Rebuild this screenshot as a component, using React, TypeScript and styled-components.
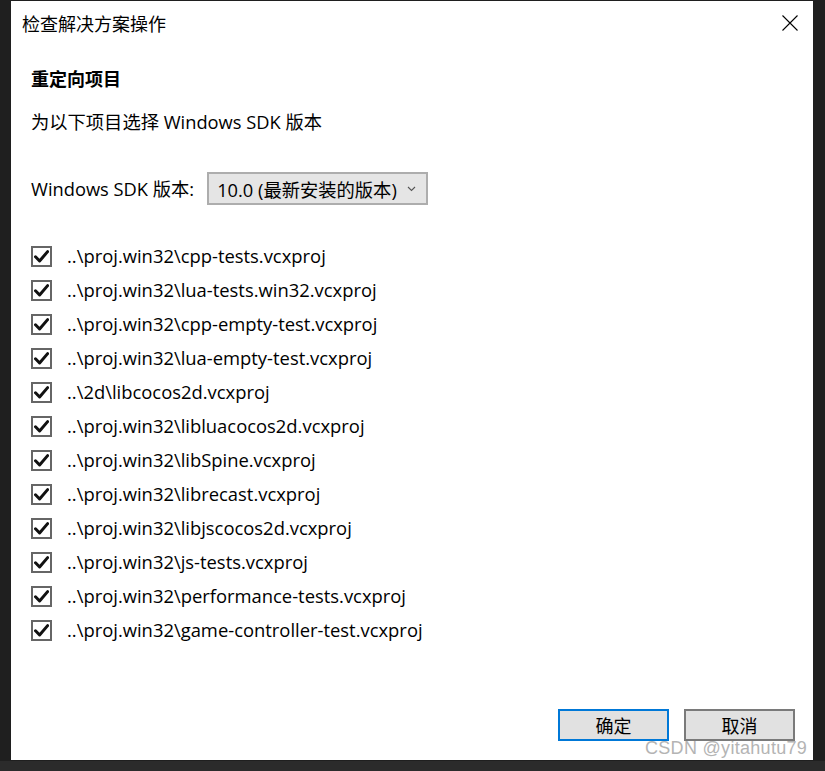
import React from "react";
import styled, { createGlobalStyle } from "styled-components";

const Global = createGlobalStyle`
  html, body { margin: 0; padding: 0; background: #1f1f1f; }
  body { font-family: "Open Sans", "Noto Sans CJK SC", sans-serif; }
`;

const Screen = styled.div`
  position: relative;
  width: 825px;
  height: 771px;
  background: #1f1f1f;
  overflow: hidden;
  display: flex;
  flex-direction: column;
`;

const Dialog = styled.div`
  margin: 1px 0 0 11px;
  width: 802px;
  height: 759px;
  background: #ffffff;
  display: flex;
  flex-direction: column;
  color: #000;
`;

const BottomBand = styled.div`
  margin-top: 1px;
  flex: 1;
  background: #2b2b2b;
`;

const TitleBar = styled.div`
  height: 44px;
  display: flex;
  align-items: center;
  justify-content: space-between;
  padding: 0 14px 0 11px;
`;

const Title = styled.div`
  font-family: "Noto Sans CJK SC", sans-serif;
  font-size: 18px;
  line-height: 22px;
  color: #000;
`;

const Close = styled.div`
  width: 18px;
  height: 18px;
  display: flex;
  align-items: center;
  justify-content: center;
`;

const Body = styled.div`
  flex: 1;
  padding: 0 0 0 20px;
  display: flex;
  flex-direction: column;
`;

const Heading = styled.div`
  margin-top: 21px;
  font-family: "Noto Sans CJK SC", sans-serif;
  font-size: 18px;
  font-weight: 700;
  line-height: 24px;
`;

const Desc = styled.div`
  margin-top: 20px;
  font-size: 18.3px;
  line-height: 24px;
`;

const SdkRow = styled.div`
  margin-top: 38px;
  display: flex;
  align-items: center;
  gap: 13px;
`;

const Label = styled.div`
  font-size: 18.3px;
  line-height: 24px;
`;

const Select = styled.div`
  width: 221px;
  height: 33px;
  box-sizing: border-box;
  border: 2px solid #adadad;
  background: #e5e5e5;
  display: flex;
  align-items: center;
  justify-content: space-between;
  padding: 0 10px 0 8px;
  font-size: 18.3px;
`;

const List = styled.div`
  margin-top: 34px;
  display: flex;
  flex-direction: column;
`;

const Item = styled.div`
  height: 34px;
  display: flex;
  align-items: center;
  gap: 15px;
`;

const Box = styled.div`
  width: 21px;
  height: 21px;
  box-sizing: border-box;
  border: 2px solid #666666;
  display: flex;
  align-items: center;
  justify-content: center;
`;

const ItemText = styled.div`
  font-size: 18.4px;
  line-height: 24px;
`;

const Footer = styled.div`
  display: flex;
  justify-content: flex-end;
  gap: 15px;
  padding: 0 18px 19px 0;
`;

const Button = styled.div<{ $primary?: boolean }>`
  width: 111px;
  height: 32px;
  box-sizing: border-box;
  border: 2px solid ${(p) => (p.$primary ? "#0078d7" : "#7a7a7a")};
  background: #e1e1e1;
  display: flex;
  align-items: center;
  justify-content: center;
  font-family: "Noto Sans CJK SC", sans-serif;
  font-size: 18px;
`;

const Watermark = styled.div`
  position: absolute;
  left: 645px;
  top: 738px;
  font-family: "Liberation Sans", Arial, sans-serif;
  font-size: 18px;
  color: #b4b4b4;
  letter-spacing: 0.3px;
`;

const items = [
  "..\\proj.win32\\cpp-tests.vcxproj",
  "..\\proj.win32\\lua-tests.win32.vcxproj",
  "..\\proj.win32\\cpp-empty-test.vcxproj",
  "..\\proj.win32\\lua-empty-test.vcxproj",
  "..\\2d\\libcocos2d.vcxproj",
  "..\\proj.win32\\libluacocos2d.vcxproj",
  "..\\proj.win32\\libSpine.vcxproj",
  "..\\proj.win32\\librecast.vcxproj",
  "..\\proj.win32\\libjscocos2d.vcxproj",
  "..\\proj.win32\\js-tests.vcxproj",
  "..\\proj.win32\\performance-tests.vcxproj",
  "..\\proj.win32\\game-controller-test.vcxproj",
];

const Check = () => (
  <svg width="15" height="13" viewBox="0 0 15 13">
    <path d="M1.5 6.8 L5.6 11 L13.6 1.6" fill="none" stroke="#111" strokeWidth="3" strokeLinecap="round" strokeLinejoin="round" />
  </svg>
);

export default function App() {
  return (
    <Screen>
      <Global />
      <Dialog>
        <TitleBar>
          <Title>检查解决方案操作</Title>
          <Close>
            <svg width="16" height="16" viewBox="0 0 16 16">
              <path d="M0.5 0.5 L15.5 15.5 M15.5 0.5 L0.5 15.5" stroke="#000" strokeWidth="1.1" />
            </svg>
          </Close>
        </TitleBar>
        <Body>
          <Heading>重定向项目</Heading>
          <Desc>为以下项目选择 Windows SDK 版本</Desc>
          <SdkRow>
            <Label>Windows SDK 版本:</Label>
            <Select>
              <span>10.0 (最新安装的版本)</span>
              <svg width="9" height="6" viewBox="0 0 9 6">
                <path d="M1 1 L4.5 4.5 L8 1" fill="none" stroke="#555" strokeWidth="1.1" />
              </svg>
            </Select>
          </SdkRow>
          <List>
            {items.map((t) => (
              <Item key={t}>
                <Box>
                  <Check />
                </Box>
                <ItemText>{t}</ItemText>
              </Item>
            ))}
          </List>
        </Body>
        <Footer>
          <Button $primary>确定</Button>
          <Button>取消</Button>
        </Footer>
      </Dialog>
      <BottomBand />
      <Watermark>CSDN @yitahutu79</Watermark>
    </Screen>
  );
}
